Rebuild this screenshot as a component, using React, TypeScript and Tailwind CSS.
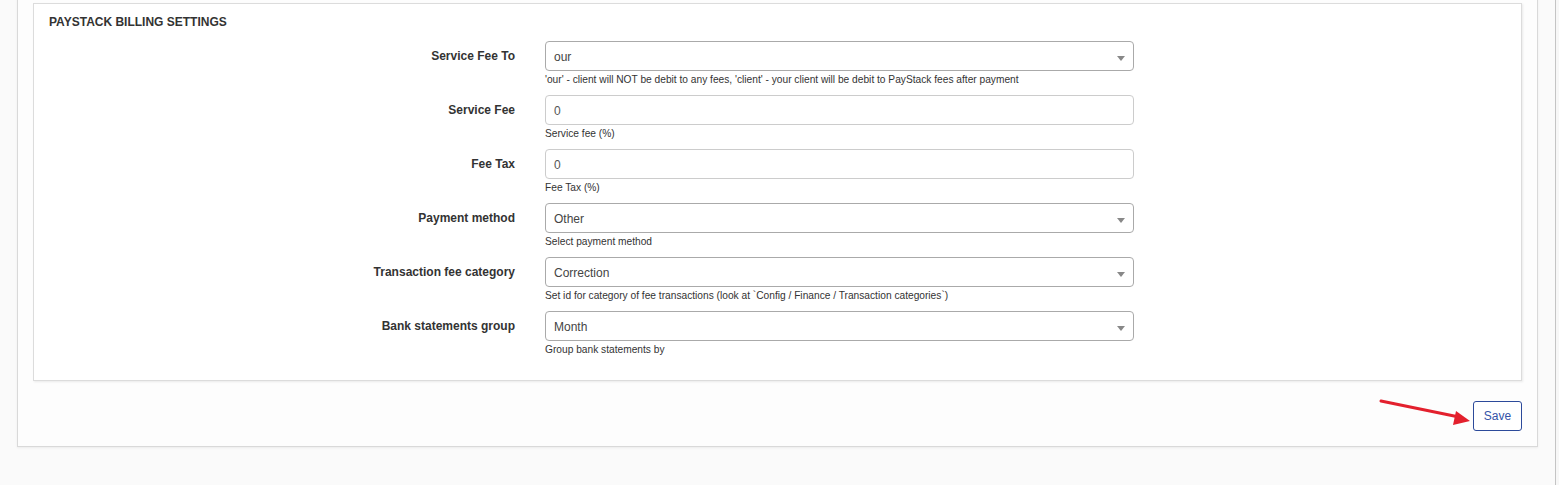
import React from "react";

type Row = { label: string; kind: "select" | "input"; value: string; help: string };

const rows: Row[] = [
  { label: "Service Fee To", kind: "select", value: "our", help: "'our' - client will NOT be debit to any fees, 'client' - your client will be debit to PayStack fees after payment" },
  { label: "Service Fee", kind: "input", value: "0", help: "Service fee (%)" },
  { label: "Fee Tax", kind: "input", value: "0", help: "Fee Tax (%)" },
  { label: "Payment method", kind: "select", value: "Other", help: "Select payment method" },
  { label: "Transaction fee category", kind: "select", value: "Correction", help: "Set id for category of fee transactions (look at `Config / Finance / Transaction categories`)" },
  { label: "Bank statements group", kind: "select", value: "Month", help: "Group bank statements by" },
];

function Field({ row }: { row: Row }) {
  return (
    <div className="flex mb-[8px]">
      <div className="w-[481px] shrink-0 text-right pt-[6px] text-[12px] leading-[18px] font-bold text-[#333]">
        {row.label}
      </div>
      <div className="ml-[30px] w-[589px]">
        {row.kind === "select" ? (
          <div className="relative h-[30px] border border-[#aaa] rounded-[4px] bg-white flex items-center pl-[8px] pt-px text-[12px] text-[#444]">
            <span>{row.value}</span>
            <span className="absolute right-[8px] top-[14px] w-0 h-0 border-l-[4px] border-r-[4px] border-t-[5px] border-l-transparent border-r-transparent border-t-[#888]" />
          </div>
        ) : (
          <div className="h-[30px] border border-[#ccc] rounded-[4px] bg-white flex items-center pl-[8px] pt-px text-[12px] text-[#555]">
            {row.value}
          </div>
        )}
        <div className="mt-[2px] text-[10.2px] leading-[14px] text-[#333]">{row.help}</div>
      </div>
    </div>
  );
}

export default function App() {
  return (
    <div
      className="w-[1559px] h-[485px] overflow-hidden bg-[#fafafa] flex"
      style={{ fontFamily: '"Liberation Sans", Arial, sans-serif' }}
    >
      <div className="w-[1555px] shrink-0">
        <div className="relative ml-[17px] w-[1521px] -mt-[13px] border border-[#d9d9d9] bg-[#fdfdfd] px-[15px] pt-[15px] pb-[15px] shadow-[0_1px_2px_rgba(0,0,0,0.06)]">
          <div className="border border-[#dcdcdc] bg-white shadow-[1px_1px_2px_rgba(0,0,0,0.08)] pt-[9px] pb-[15px] px-[15px]">
            <div className="text-[12px] leading-[18px] font-bold text-[#333] uppercase">Paystack Billing Settings</div>
            <div className="mt-[10px] -ml-[15px]">
              {rows.map((r) => (
                <Field key={r.label} row={r} />
              ))}
            </div>
          </div>
          <div className="flex justify-end mt-[20px]">
            <button className="h-[30px] w-[49px] border border-[#2c4a9a] rounded-[3px] bg-white text-[12px] text-[#3553a8]">
              Save
            </button>
          </div>
          <svg
            className="absolute left-0 top-0 pointer-events-none"
            width="1521"
            height="460"
            viewBox="0 0 1521 460"
          >
            <g transform="translate(-17,13)">
              <line x1="1380" y1="400" x2="1458" y2="416" stroke="#e3202d" strokeWidth="3" strokeLinecap="round" />
              <polygon points="1469,420 1455,410 1452,424" fill="#e3202d" />
            </g>
          </svg>
        </div>
      </div>
      <div className="flex-1 border-l border-[#c4c4c4] bg-[#f7f7f7]" />
    </div>
  );
}
